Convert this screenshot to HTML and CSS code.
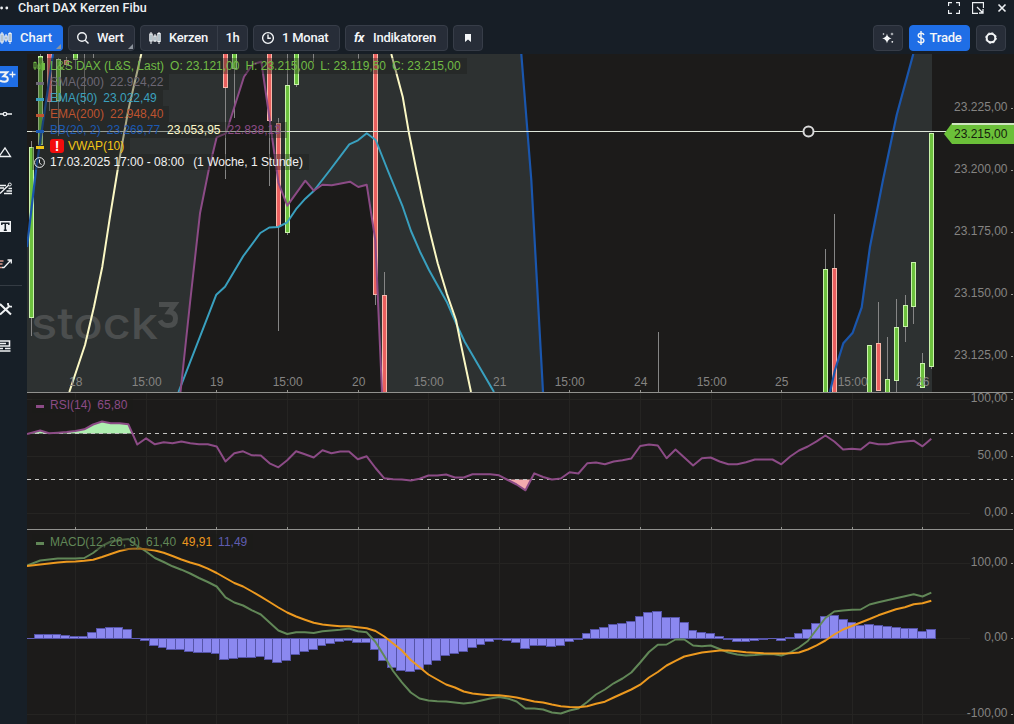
FILE: index.html
```html
<!DOCTYPE html>
<html lang="de">
<head>
<meta charset="utf-8">
<title>Chart DAX Kerzen Fibu</title>
<link rel="stylesheet" href="styles.css">
</head>
<body>
<div class="app">
  <header class="titlebar">
    <svg class="dots" width="10" height="16" viewBox="0 0 10 16"><circle cx="1.6" cy="8" r="1.4"/><circle cx="6.8" cy="8" r="1.4"/></svg>
    <span class="title">Chart DAX Kerzen Fibu</span>
    <div class="window-controls">
      <svg width="12" height="12" viewBox="0 0 12 12"><path d="M.5 4V.5H4M8 .5h3.500V4M11.500 8v3.500H8M4 11.500H.5V8"/></svg>
      <svg width="12" height="12" viewBox="0 0 12 12"><path d="M11.500 6V.5H.5V11.500H6M5 5l5.500 5.500M11 7v4h-4"/></svg>
      <svg width="12" height="12" viewBox="0 0 12 12"><path d="M2.500 2.500l7 7M9.500 2.500l-7 7" stroke-width="1.600"/></svg>
    </div>
  </header>

  <nav class="toolbar">
    <button class="btn chart-btn primary">
      <svg class="candles" width="12" height="14" viewBox="0 0 12 14"><path d="M2 1v12M6 3v8M10 1v12"/><rect x=".8" y="3" width="2.400" height="8"/><rect x="4.800" y="5" width="2.400" height="4"/><rect x="8.800" y="2.500" width="2.400" height="8"/></svg>
      <span>Chart</span><i class="corner"></i>
    </button>
    <button class="btn wert-btn">
      <svg width="14" height="14" viewBox="0 0 14 14"><circle cx="6" cy="6" r="4.300"/><path d="M9.200 9.200l3.300 3.300"/></svg>
      <span>Wert</span><i class="corner"></i>
    </button>
    <div class="btn group-btn">
      <span class="group-main">
        <svg class="candles" width="12" height="14" viewBox="0 0 12 14"><path d="M2 1v12M6 3v8M10 1v12"/><rect x=".8" y="3" width="2.400" height="7"/><rect x="4.800" y="5" width="2.400" height="5"/><rect x="8.800" y="2.500" width="2.400" height="8"/></svg>
        <span>Kerzen</span>
      </span>
      <span class="group-side">1h</span>
    </div>
    <button class="btn month-btn">
      <svg width="14" height="14" viewBox="0 0 14 14"><circle cx="7" cy="7" r="5.400"/><path d="M7 3.500V7.300H9.800"/></svg>
      <span>1 Monat</span>
    </button>
    <button class="btn ind-btn"><em class="fx">fx</em><span>Indikatoren</span></button>
    <button class="btn icon-btn"><svg class="solid" width="12" height="12" viewBox="0 0 12 12"><path d="M3 2h6v8L6 7.500 3 10z"/></svg></button>
    <div class="spacer"></div>
    <button class="btn icon-btn"><svg class="solid" width="14" height="14" viewBox="0 0 14 14"><path d="M6 2.500q.5 4.200 4.600 4.900Q6.500 8.100 6 12.500 5.500 8.100 1.200 7.400 5.500 6.700 6 2.500zM11 1.200l.4 1.400 1.400.4-1.400.4-.4 1.400-.4-1.400-1.400-.4 1.400-.4z"/><circle cx="11.300" cy="10.800" r=".9"/><circle cx="2.500" cy="3" r=".8"/></svg></button>
    <button class="btn trade-btn primary">
      <svg width="8" height="16" viewBox="0 0 8 16"><path d="M4 1v14M7 5Q6.500 3.300 4 3.300 1.200 3.300 1.200 5.500 1.200 7.300 4 7.900 6.900 8.600 6.900 10.500 6.900 12.700 4 12.700 1.400 12.700 1 10.800"/></svg>
      <span>Trade</span>
    </button>
    <button class="btn icon-btn"><svg width="14" height="14" viewBox="0 0 14 14"><circle cx="7" cy="7" r="4.300" stroke-width="2"/><circle cx="7" cy="7" r="5.300" stroke-width="1" stroke-dasharray="2 2.162"/></svg></button>
  </nav>

  <div class="body">
    <aside class="sidebar">
      <div class="tool logo-tool"><svg width="17" height="21" viewBox="0 0 17 21"><path d="M-2 6.300H6.700L3 10.200Q7.300 10 7.300 13 7.300 15.800 4 15.800 1.500 15.800-.5 14.500" stroke-width="2"/><path d="M12 5.500v6M9 8.500h6" stroke-width="1.300"/></svg></div>
      <div class="tool"><svg width="14" height="14" viewBox="0 0 14 14"><path d="M0 7h3.200M6.800 7H12"/><circle cx="5" cy="7" r="1.700"/></svg></div>
      <div class="tool"><svg width="14" height="14" viewBox="0 0 14 14"><path d="M-1 11.500L5 3l5.500 8.500z"/></svg></div>
      <div class="tool"><svg width="14" height="14" viewBox="0 0 14 14"><path d="M0 3.500h6M0 6h4M8.500 6.500H12M6.500 9H12M4 11.500h8M0 11.500L8.800 3" stroke-width="1.400"/><circle cx="9.800" cy="2.500" r="1.500" stroke-width="1"/></svg></div>
      <div class="tool"><svg width="14" height="14" viewBox="0 0 14 14"><rect class="fill" x="-2" y="1" width="13" height="11"/><path class="ink" d="M1.800 5V3.200h7V5M5.300 3.200v7M3.800 10.200h3" stroke-width="1.500"/></svg></div>
      <div class="tool"><svg width="14" height="14" viewBox="0 0 14 14"><path d="M2 10.500h2L11 3M7.500 3H11.300v3.500"/><path class="warm" d="M0 4h3.500M0 7h2.500M0 10.500h2"/></svg></div>
      <hr class="rule">
      <div class="tool"><svg width="14" height="14" viewBox="0 0 14 14"><path d="M0 2l11 10.500M9 4.500l-9 8" stroke-width="2"/><path d="M8 1Q7.500 5 12 4.600" stroke-width="1.800"/></svg></div>
      <div class="tool"><svg width="14" height="14" viewBox="0 0 14 14"><path d="M0 12h10.500M0 9.500h3M5 9.500h5.500M0 2h9.500v5H0M0 4.500h6" stroke-width="1.600"/></svg></div>
    </aside>

    <main class="chart">
      <svg class="plot" id="plot" width="987" height="670" viewBox="27 54 987 670">
        <defs><clipPath id="priceArea"><rect x="27" y="54" width="987" height="338"/></clipPath></defs>
        <g id="grid" class="grid"></g>
        <g clip-path="url(#priceArea)">
          <path class="band" d="M27 247L36 170 53 54H521.300L531.300 180 543 392H382L375.300 240 366.700 184.700 358.300 187 350 181.700 331.700 185.300 322.300 184.700 313.700 190.700 305.300 180.700 287.300 205.700 278.500 183 268.300 110 261.300 61.700 252.700 64.300 244 76.700 226 133.300 216.700 137.300 208.700 170 200 213.300 190 303 180.500 392H27z"/>
          <path class="band" d="M830 392L835 370 843.300 343.300 852.700 332.700 861.700 307.300 870 246.700 883 180 896.700 115 913.300 54H932V392z"/>
          <g class="watermark">
            <text x="31" y="339" textLength="127" lengthAdjust="spacingAndGlyphs">stock</text>
            <path d="M159 304.500H174.500L169 312Q175.500 312.500 175.500 318.500 175.500 325.500 168 325.500 162.500 325.500 160 320.500"/>
          </g>
          <g id="candles"></g>
          <path class="line ema" d="M178.500 392L216.300 294.700 225 286.700 243.300 256 260.300 233 269.300 227.500 278.300 227 287.300 222.300 296.700 208.300 305.300 198.700 313.700 191 330 170 349.300 144.300 358 140.300 366.700 133.300 375.700 140 388 171 402.700 206.700 411 231 420 251.700 429 270 446.700 301.700 458.300 328.300 464.700 341.700 494 392"/>
          <path class="line lower" d="M180.500 392L190 303 200 213.300 208.700 170 216.700 137.300 226 133.300 244 76.700 252.700 64.300 261.300 61.700 268.300 110 278.500 183 287.300 205.700 305.300 180.700 313.700 190.700 322.300 184.700 331.700 185.300 350 181.700 358.300 187 366.700 184.700 375.300 240 382 392"/>
          <path class="line upper" d="M27 247L36 170 53 54M521.300 54L531.300 180 543 392M830 392L835 370 843.300 343.300 852.700 332.700 861.700 307.300 870 246.700 883 180 896.700 115 913.300 54"/>
          <path class="line middle" d="M69.300 392L85 345 94 306.700 102.300 266.700 110 216.700 117.300 172 121.700 146.700 128.300 110 141.300 54M391.300 54L402.700 96.700 409 133.300 416.300 170 423.300 203.300 429 228.300 437.700 263.300 446.700 293.300 456 320 460 340 471 392"/>
        </g>
        <path class="alarm" d="M27 131.500H803M814 131.500H946"/>
        <circle class="alarm-knob" cx="808.500" cy="131.500" r="5"/>
        <path class="frame" d="M27 392.500H1013M27 529.500H1013"/>
        <path class="tag" d="M944 134L952 123H1014V144H952z"/>
        <path class="tag-top" d="M952 124H1014"/>
        <path class="overbought" d="M28 433.500L40.200 430.500 49 433.200 58 432.700 66.700 432 75.500 431 84.300 429.300 93 424.500 102 421.500 110.800 423.300 119.600 423.300 128.400 424.300 132.500 433.500z"/>
        <path class="oversold" d="M508 479.500L516.700 484.500 525.500 490.300 530.500 479.500z"/>
        <path class="threshold" d="M27 433.500H1013M27 479.500H1013"/>
        <g id="series"></g>
        <g id="labels" class="labels"></g>
        <text class="tag-text" x="954" y="138">23.215,00</text>
      </svg>

      <div class="legend main-legend">
        <div class="row price"><svg class="mark" width="12" height="12" viewBox="0 0 12 12"><path d="M2 1.500v1M2 8v2M6 3v2M6 8.500v2M10 1v2M10 9v2"/><rect x="1" y="2.500" width="2" height="5.500"/><rect x="5" y="5" width="2" height="3.500"/><rect class="full" x="9" y="3.500" width="2.500" height="6"/></svg><span>L&amp;S DAX (L&amp;S, Last)</span><span>O: 23.121,00</span><span>H: 23.215,00</span><span>L: 23.119,50</span><span>C: 23.215,00</span></div>
        <div class="row sma"><i class="dash"></i><span>SMA(200)</span><span>22.924,22</span></div>
        <div class="row ema50"><i class="dash"></i><span>EMA(50)</span><span>23.022,49</span></div>
        <div class="row ema200"><i class="dash"></i><span>EMA(200)</span><span>22.948,40</span></div>
        <div class="row bb"><i class="dash"></i><span>BB(20, 2)</span><span>23.269,77</span><span class="mid">23.053,95</span><span class="low">22.838,13</span></div>
        <div class="row vwap"><i class="dash"></i><b class="warn">!</b><span>VWAP(10)</span></div>
        <div class="row time"><svg class="mark" width="12" height="12" viewBox="0 0 12 12"><circle cx="6.500" cy="6.500" r="4.900"/><path d="M6.500 3.500v3.300l2 2"/></svg><span>17.03.2025 17:00 - 08:00</span><span class="span-info">(1 Woche, 1 Stunde)</span></div>
      </div>
      <div class="legend rsi-legend"><div class="row rsi"><i class="dash"></i><span>RSI(14)</span><span>65,80</span></div></div>
      <div class="legend macd-legend"><div class="row macd"><i class="dash"></i><span>MACD(12, 26, 9)</span><span>61,40</span><span class="signal">49,91</span><span class="hist">11,49</span></div></div>
    </main>
  </div>
</div>
<script src="chart.js"></script>
</body>
</html>
```

FILE: styles.css
```css
* { box-sizing: border-box; }

body {
  margin: 0;
  background: #171e26;
  color: #eef1f4;
  font-family: Roboto, "Liberation Sans", sans-serif;
  overflow: hidden;
}

.app {
  display: grid;
  grid-template-rows: 16px 38px 670px;
  width: 1014px;
  height: 724px;
}

svg { display: block; flex: none; }

.titlebar { display: flex; align-items: center; }
.dots { margin-right: 8px; fill: #eef1f4; }
.title { font-size: 12.500px; font-weight: 500; letter-spacing: 0.090px; line-height: 16px; }

.window-controls {
  display: flex;
  gap: 12px;
  margin-left: auto;
  padding-right: 6px;
}
.window-controls svg { fill: none; stroke: #eef1f4; stroke-width: 1.300; }

.toolbar {
  display: flex;
  gap: 5px;
  padding: 9px 8px 3px 0;
}

.btn {
  position: relative;
  display: flex;
  align-items: center;
  justify-content: center;
  height: 26px;
  padding: 0;
  border: 1px solid #373d48;
  border-radius: 4px;
  background: #272d38;
  color: #f4f6f8;
  font: 500 13px/24px Roboto, "Liberation Sans", sans-serif;
  letter-spacing: -0.220px;
  white-space: nowrap;
  overflow: hidden;
}
.btn svg { fill: none; stroke: #f4f6f8; stroke-width: 1.400; }
.btn svg.solid { fill: #f4f6f8; stroke: none; }
.btn svg.candles { stroke-width: 1; fill: #9ab0b8; }
.btn.primary { background: #1f6ee6; border-color: #1f6ee6; }

.chart-btn { width: 63px; justify-content: flex-start; gap: 8px; border-left: 0; border-radius: 0 4px 4px 0; letter-spacing: 0; }
.wert-btn { width: 67px; justify-content: flex-start; gap: 7px; padding-left: 7px; }
.group-btn { width: 108px; justify-content: flex-start; }
.group-main { display: flex; align-items: center; gap: 8px; width: 77px; padding-left: 8px; border-right: 1px solid #373d48; }
.group-side { flex: 1; text-align: center; }
.month-btn { width: 87px; justify-content: flex-start; gap: 7px; padding-left: 7px; }
.ind-btn { width: 103px; justify-content: flex-start; gap: 9px; padding-left: 8px; }
.icon-btn { width: 30px; }
.trade-btn { width: 61px; gap: 4px; margin: 0 1px; }
.fx { font-weight: 700; letter-spacing: -0.500px; }
.spacer { flex: 1; }

.corner {
  position: absolute;
  right: 1px;
  bottom: 1px;
  border-left: 5px solid transparent;
  border-bottom: 5px solid #8d949c;
}

.body { display: flex; }

.sidebar {
  display: flex;
  flex-direction: column;
  width: 27px;
  padding-top: 4px;
  background: #171f27;
}
.tool { display: flex; align-items: center; height: 37.500px; }
.tool svg { fill: none; stroke: #f0f2f4; stroke-width: 1.300; }
.tool .fill { fill: #f0f2f4; stroke: none; }
.tool .ink { stroke: #171f27; }
.tool .warm { stroke: #d99b8d; }
.logo-tool svg { background: #1f6ee6; width: 18px; }
.rule { width: 22px; height: 1px; margin: 2px 0 4px; border: 0; background: #343b43; }

.chart { position: relative; flex: 1; background: #1c1b1a; }

.grid path { stroke: #252422; fill: none; shape-rendering: crispEdges; }
.grid .tick { stroke: #94948f; }
.band { fill: #2d3131; }
.line { fill: none; stroke-width: 2; stroke-linejoin: round; }
.ema { stroke: #39a0bf; }
.lower, .rsi-line { stroke: #8c4b86; }
.upper { stroke: #1a56ad; stroke-width: 2.200; }
.middle { stroke: #fbf8c4; }
.macd-line { stroke: #618757; }
.signal-line { stroke: #ec991f; }

.watermark text { font: 500 43px Inter, sans-serif; fill: #4b4e4e; }
.watermark path { fill: none; stroke: #4b4e4e; stroke-width: 5; }

.wick { stroke: #858585; shape-rendering: crispEdges; }
.candle { shape-rendering: crispEdges; }
.candle.up { fill: #6dc13e; stroke: #c9f3ab; }
.candle.down { fill: #e9605f; stroke: #f8b9ab; }
.bar { fill: #8b88f0; stroke: #5654a8; shape-rendering: crispEdges; }
.baseline { stroke: #5f5db5; shape-rendering: crispEdges; }

.alarm { stroke: #dfe6da; }
.alarm-knob { fill: #1c1b1a; stroke: #d9d9d9; stroke-width: 2; }
.frame { stroke: #91918e; }
.tag { fill: #6bc039; }
.tag-top { stroke: #cfe6bf; stroke-width: 2; }
.overbought { fill: #aeeeb0; }
.oversold { fill: #f3aaae; }
.threshold { stroke: #c4c4c2; stroke-dasharray: 4 4; }
.labels text, .tag-text { font: 12px "Liberation Sans", sans-serif; fill: #858482; }
.tag-text { fill: #15210d; }

.legend {
  position: absolute;
  left: 5px;
  display: flex;
  flex-direction: column;
  align-items: flex-start;
  font: 12px/16px "Liberation Sans", sans-serif;
  white-space: pre;
}
.main-legend { top: 4px; }
.rsi-legend { top: 343px; }
.macd-legend { top: 480px; }

.row {
  display: flex;
  align-items: center;
  gap: 6px;
  height: 16px;
  padding-right: 6px;
  background: rgba(28, 27, 26, 0.360);
}
.dash { width: 8px; height: 3px; margin: 2px 0 0 4px; background: currentColor; }
.mark { margin-left: 1px; margin-right: -1px; fill: none; stroke: currentColor; }
.price { color: #71bc45; }
.price .full { fill: currentColor; }
.sma { color: #6c6774; }
.ema50 { color: #3ba0be; }
.ema200 { color: #bd532f; }
.bb { color: #1c59b2; }
.bb .mid { color: #fbf8c8; margin-left: 1px; }
.bb .low { color: #8c4b86; margin-left: 1px; }
.vwap { color: #f2c516; gap: 6px; }
.warn {
  width: 14px;
  height: 14px;
  margin-right: -2px;
  border-radius: 3px;
  background: #f20d0d;
  color: #fff;
  font-size: 14px;
  line-height: 14px;
  text-align: center;
}
.time { color: #f1f1f1; }
.span-info { margin-left: 3px; }
.rsi { color: #8c4b86; }
.macd { color: #618757; }
.macd .signal { color: #ec991f; }
.macd .hist { color: #5f5db0; }
```

FILE: chart.js
```js
const NS = "http://www.w3.org/2000/svg";

function add(parent, name, attrs, text) {
  const el = document.createElementNS(NS, name);
  for (const key in attrs) el.setAttribute(key, attrs[key]);
  if (text) el.textContent = text;
  document.getElementById(parent).appendChild(el);
}

// Time axis: label and position of every tick, eight hours apart.
const times = ["18", "15:00", "19", "15:00", "20", "15:00", "21", "15:00", "24", "15:00", "25", "15:00", "26"];
times.forEach((label, i) => {
  const x = Math.floor(75.7 + 70.6 * i) + 0.5;
  add("grid", "path", { d: `M${x} 393V724` });
  add("grid", "path", { class: "tick", d: `M${x} 390V393M${x} 527V530` });
  add("labels", "text", { x: x + 0.2, y: 386, "text-anchor": "middle" }, label);
});

// Value axes: tick position and label.
const values = [[107.5, "23.225,00"], [169.5, "23.200,00"], [231.5, "23.175,00"], [293.5, "23.150,00"],
  [355.5, "23.125,00"], [399.5, "100,00"], [456.5, "50,00"], [513.5, "0,00"],
  [563.5, "100,00"], [638.5, "0,00"], [714.5, "-100,00"]];
for (const [y, label] of values) {
  const lower = y > 392;
  if (lower) add("grid", "path", { d: `M27 ${y}H970` });
  add("grid", "path", { class: "tick", d: `M1011 ${lower ? y : y + 1}H1013` });
  add("labels", "text", { x: 1007.5, y: Math.floor(y) + (lower ? 3 : 4), "text-anchor": "end" }, label);
}

// Candles: x, wick top, wick bottom, body top, body bottom, up.
const candles = [
  [31.5, 141, 336, 147, 317, 1], [40.5, 54, 144, 56, 144, 1], [49.5, 40, 111, 40, 101, 0],
  [58.5, 58, 136, 59, 100, 1], [66.5, 57, 67, 60, 64, 0], [75.5, 40, 69, 40, 59, 1],
  [84.5, 40, 104], [93.5, 40, 58], [225.5, 40, 179, 40, 87, 0], [234.5, 40, 118, 40, 68, 1],
  [269.5, 40, 186, 40, 120, 0], [278.5, 118, 331, 123, 226, 0], [287.5, 54, 235, 85, 232, 1],
  [296.5, 40, 87, 40, 84, 1], [313.5, 40, 62], [358.5, 40, 59], [375.5, 40, 305, 40, 294, 0],
  [384.5, 272, 400, 295, 400, 0], [658.5, 332, 400], [825.5, 249, 400, 269, 400, 1],
  [834.5, 214, 400, 268, 400, 0], [869.5, 345, 400, 345, 400, 1], [878.5, 302, 391, 343, 390, 0],
  [887.5, 337, 400, 379, 400, 1], [896.5, 299, 400, 327, 380, 1], [905.5, 295, 342, 305, 326, 1],
  [913.5, 262, 324, 262, 306, 1], [922.5, 353, 388, 363, 387, 1], [931.5, 133, 369, 133, 366, 1]];
for (const [x, hi, lo, top, bottom, up] of candles) {
  add("candles", "path", { class: "wick", d: `M${x} ${hi}V${lo}` });
  if (top !== undefined) {
    add("candles", "rect", { class: "candle " + (up ? "up" : "down"), x: x - 2, y: top + 0.5, width: 4, height: bottom - top });
  }
}

// MACD histogram, one value per hour.
const histogram = [4, 4, 4, 3, 2, 2, 6, 10, 11, 11, 9, 0, -2, -7, -9, -11, -11, -13, -14, -14, -15, -21, -20, -19,
  -19, -18, -21, -24, -22, -16, -13, -11, -7, -5, -3, -2, -4, -4, -11, -22, -29, -32, -33, -31, -26, -22, -17,
  -15, -13, -9, -6, -3, -1, -2, -4, -10, -7, -7, -8, -7, -3, -1, 5, 9, 11, 14, 15, 17, 22, 26, 27, 21, 21, 16,
  8, 6, 5, 2, -1, -3, -3, -2, -1, 0, -2, 1, 5, 9, 15, 22, 23, 19, 16, 13, 14, 13, 12, 11, 10, 10, 7, 9];
add("series", "path", { class: "baseline", d: "M27 638.5H935" });
histogram.forEach((v, i) => {
  const x = Math.round(34 + 8.833 * i);
  const next = Math.round(34 + 8.833 * (i + 1));
  if (v) add("series", "rect", { class: "bar", x: x + 0.5, y: 638.5 - Math.max(v, 0), width: next - x, height: Math.abs(v) });
});

// Curves: first value sits on the left edge, the rest follow hour by hour.
function curve(name, ys) {
  const points = ys.map((y, i) => `${i ? (40.2 + 8.823 * (i - 1)).toFixed(1) : 27} ${y}`);
  add("series", "path", { class: "line " + name, d: "M" + points.join("L") });
}

curve("rsi-line", [434, 430.5, 433.3, 432.7, 432, 431, 429.3, 424.5, 421.5, 423.3, 423.3, 424.3, 444.5, 438.3, 444.3,
  442.3, 443.2, 441.5, 443.3, 444.3, 444.3, 446.5, 461.5, 453.3, 451.3, 455.3, 455.5, 463.3, 467.3, 460.3, 451.3,
  454.3, 457.5, 450.3, 453.3, 451.5, 451.5, 459.3, 456.3, 468, 478.3, 479.3, 479.5, 480.5, 478.7, 475.5, 475.5,
  474.5, 477.5, 477.5, 474.3, 474.3, 474.3, 475.3, 480, 484.5, 490.3, 473.3, 477, 479.5, 478.5, 472.3, 473.5,
  463.3, 462.5, 464.3, 461.5, 460.3, 458.5, 446, 444.5, 445.5, 458.3, 449.5, 457.5, 465.5, 458.3, 457.5, 461.5,
  464.3, 464.3, 462.3, 459.5, 459.5, 459.5, 464.3, 456.5, 450.5, 446.5, 441.3, 435.5, 441.5, 449.5, 448.7, 449.5,
  442.5, 444.3, 444.3, 442.5, 441.5, 440.7, 446.3, 438.7]);

curve("macd-line", [565.5, 560.5, 559.5, 558.5, 558.5, 558.5, 558, 553, 546, 541.5, 540, 539, 546, 551.5, 558, 562,
  566.3, 569.7, 573.5, 578, 582, 586.5, 597.3, 602.5, 605.5, 610.3, 614.5, 622.5, 630.5, 634, 632.3, 632.3, 633,
  631.3, 630.5, 629.7, 628.5, 631.3, 632.3, 642, 656, 671, 682.3, 692.5, 698.5, 700.5, 701.2, 701.5, 702.5, 703.5,
  702.5, 700.5, 698.5, 697, 698.5, 701.5, 708.5, 708.5, 709.5, 712.5, 713.5, 710.5, 708.5, 702, 694.5, 689.5,
  683.3, 678.5, 672.5, 662.5, 652, 644.7, 644.5, 639.5, 639.5, 645.5, 646.3, 645.5, 649, 652.5, 654.5, 655.5, 655,
  654.3, 654, 655.5, 652.5, 647.5, 641, 629.5, 618, 611.5, 610.5, 609.7, 609.5, 604.5, 602.3, 600.3, 598.3, 596.3,
  594.3, 596.5, 592.7]);

curve("signal-line", [566, 564.5, 563.5, 562.5, 561.8, 561.5, 560.8, 559.7, 557, 554, 551, 549, 548.5, 549.3, 550.5,
  552.8, 556, 559.5, 562.5, 565, 568.7, 573, 578, 583, 586.5, 591.5, 596.7, 602, 607.5, 612.5, 616.5, 619.7, 622.7,
  624.5, 625.5, 626.3, 626.3, 627.2, 628.3, 631, 636.5, 643.5, 650.5, 660, 667.3, 674.5, 679.5, 684.5, 687.5,
  691.5, 693.5, 694.5, 695.3, 695.3, 696.3, 697.5, 699.5, 701.5, 702.5, 704.5, 706.3, 707, 707.3, 706.3, 703.7,
  701.7, 697.5, 693.5, 689.5, 684.7, 677.5, 672, 665.5, 660.8, 656.5, 654.5, 652.5, 651.5, 650.5, 650.5, 651.3,
  652.3, 652.7, 653.3, 653.5, 653.5, 653.3, 652.5, 649.5, 645.3, 640.5, 634.5, 629.5, 626, 622.5, 619, 615.3,
  612.3, 609.3, 607.3, 604.3, 603.3, 600.7]);
```
